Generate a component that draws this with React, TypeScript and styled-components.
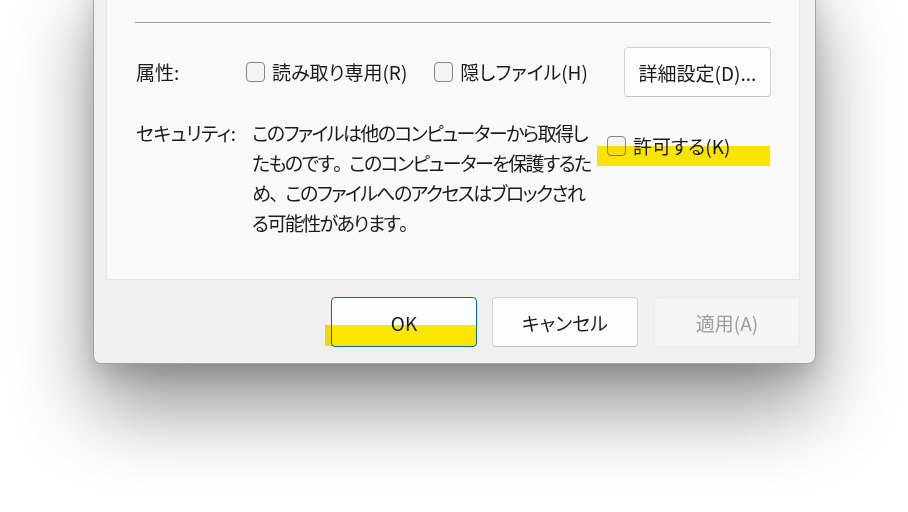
import React from "react";
import styled, { createGlobalStyle } from "styled-components";

const Global = createGlobalStyle`
  html, body {
    margin: 0;
    padding: 0;
    background: #ffffff;
  }
  body {
    font-family: "Noto Sans CJK JP", "Noto Sans", sans-serif;
    font-feature-settings: "palt";
    color: #1a1a1a;
  }
`;

const Stage = styled.div`
  width: 908px;
  height: 512px;
  overflow: hidden;
  box-sizing: border-box;
  padding-left: 93px;
  background: #ffffff;
`;

const Window = styled.div`
  width: 723px;
  box-sizing: border-box;
  margin-top: -30px;
  border: 1px solid #a3a3a3;
  border-radius: 8px;
  background: #f0f0f0;
  padding: 0 14px 16px 12px;
  box-shadow: 0 44px 80px 0 rgba(0, 0, 0, 0.42), 0 10px 24px rgba(0, 0, 0, 0.14);
`;

const Panel = styled.div`
  background: #f9f9f9;
  border: 1px solid #e6e6e6;
  border-top: none;
  padding: 51px 28px 41px 28px;
  margin-right: 1px;
`;

const Separator = styled.div`
  height: 1px;
  background: #a3a3a3;
  margin-bottom: 24px;
`;

const Row = styled.div<{ $align?: string }>`
  display: flex;
  align-items: ${(p) => p.$align || "center"};
  font-size: 19px;
`;

const Label = styled.div`
  width: 111px;
  flex: none;
  line-height: 30px;
  padding-left: 1px;
  box-sizing: border-box;
`;

const SecurityLabel = styled(Label)`
  letter-spacing: -0.6px;
`;

const CheckItem = styled.label<{ $gapLeft?: number }>`
  position: relative;
  display: flex;
  align-items: center;
  gap: 7px;
  margin-left: ${(p) => p.$gapLeft || 0}px;
  line-height: 30px;
  white-space: nowrap;
`;

const Box = styled.span`
  display: inline-block;
  width: 17px;
  height: 18px;
  border: 1px solid #858585;
  border-radius: 4px;
  background: #f3f3f3;
  flex: none;
`;

const Text = styled.span`
  position: relative;
  z-index: 1;
`;

const DetailButton = styled.button`
  margin-left: auto;
  width: 147px;
  height: 50px;
  border: 1px solid #d3d3d3;
  border-bottom-color: #c4c4c4;
  border-radius: 4px;
  background: #fdfdfd;
  font: inherit;
  font-size: 19px;
  color: #1a1a1a;
  padding: 0;
`;

const SecurityRow = styled(Row)`
  margin-top: 21px;
`;

const Message = styled.div`
  width: 355px;
  flex: none;
  margin-left: 6px;
  line-height: 30px;
  letter-spacing: -1.6px;
`;

const MessageLine = styled.span`
  display: block;
  white-space: nowrap;
`;

const Stop = styled.span`
  font-feature-settings: normal;
  letter-spacing: -3px;
`;

const AllowItem = styled(CheckItem)`
  margin-top: 13px;
`;

const Highlight = styled.span<{ $l: number; $t: number; $w: number; $h: number }>`
  position: absolute;
  left: ${(p) => p.$l}px;
  top: ${(p) => p.$t}px;
  width: ${(p) => p.$w}px;
  height: ${(p) => p.$h}px;
  background: #ffe900;
  mix-blend-mode: multiply;
  pointer-events: none;
  z-index: 2;
`;

const Footer = styled.div`
  display: flex;
  justify-content: flex-end;
  gap: 15px;
  padding-top: 17px;
  margin-right: 1px;
`;

const DialogButton = styled.button<{ $variant?: "default" | "primary" | "disabled" }>`
  position: relative;
  width: 146px;
  height: 50px;
  padding: 0;
  margin-left: ${(p) => (p.$variant === "disabled" ? "1px" : "0")};
  border-radius: 4px;
  font: inherit;
  font-size: 19px;
  border: 1px solid
    ${(p) =>
      p.$variant === "primary" ? "#0a67bd" : p.$variant === "disabled" ? "#ebebeb" : "#d2d2d2"};
  border-bottom-color: ${(p) =>
    p.$variant === "primary" ? "#0a67bd" : p.$variant === "disabled" ? "#ebebeb" : "#c2c2c2"};
  background: ${(p) => (p.$variant === "disabled" ? "#f5f5f5" : "#fdfdfd")};
  color: ${(p) => (p.$variant === "disabled" ? "#9d9d9d" : "#1a1a1a")};
`;

export default function App() {
  return (
    <>
      <Global />
      <Stage>
        <Window>
          <Panel>
            <Separator />
            <Row>
              <Label>属性:</Label>
              <CheckItem>
                <Box />
                <Text>読み取り専用(R)</Text>
              </CheckItem>
              <CheckItem $gapLeft={27}>
                <Box />
                <Text>隠しファイル(H)</Text>
              </CheckItem>
              <DetailButton>詳細設定(D)...</DetailButton>
            </Row>
            <SecurityRow $align="flex-start">
              <SecurityLabel>セキュリティ:</SecurityLabel>
              <Message>
                <MessageLine>このファイルは他のコンピューターから取得し</MessageLine>
                <MessageLine>
                  たものです<Stop>。</Stop>このコンピューターを保護するた
                </MessageLine>
                <MessageLine>
                  め<Stop>、</Stop>このファイルへのアクセスはブロックされ
                </MessageLine>
                <MessageLine>
                  る可能性があります<Stop>。</Stop>
                </MessageLine>
              </Message>
              <AllowItem>
                <Box />
                <Text>許可する(K)</Text>
                <Highlight $l={-10} $t={15} $w={173} $h={20} />
              </AllowItem>
            </SecurityRow>
          </Panel>
          <Footer>
            <DialogButton $variant="primary">
              OK
              <Highlight $l={-7} $t={27} $w={151} $h={21} />
            </DialogButton>
            <DialogButton>キャンセル</DialogButton>
            <DialogButton $variant="disabled">適用(A)</DialogButton>
          </Footer>
        </Window>
      </Stage>
    </>
  );
}
